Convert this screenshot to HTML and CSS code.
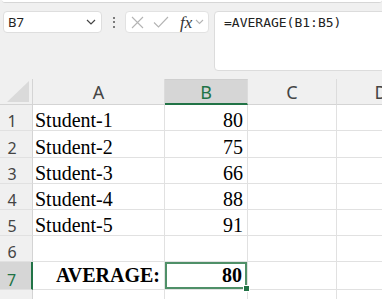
FILE: index.html
```html
<!DOCTYPE html>
<html lang="en">
<head>
  <meta charset="UTF-8">
  <meta name="viewport" content="width=device-width, initial-scale=1.0">
  <title>AVERAGE — Sheet1</title>
  <link rel="stylesheet" href="styles.css">
</head>
<body>

  <div class="ribbon-edge"></div>

  <!-- Formula bar -->
  <div class="formula-bar">
    <div class="name-box">
      <span>B7</span>
      <svg class="chev" width="10" height="6" viewBox="0 0 10 6"><path d="M1 1l4 4 4-4" fill="none" stroke="#444" stroke-width="1.2"/></svg>
    </div>
    <div class="grip"><i></i><i></i><i></i></div>
    <div class="fx-box">
      <svg width="13" height="13" viewBox="0 0 13 13"><path d="M1 1l11 11M12 1L1 12" fill="none" stroke="#b4b4b4" stroke-width="1.1"/></svg>
      <svg class="check" width="16" height="12" viewBox="0 0 16 12"><path d="M1 6.5l4.5 4.5L15 1" fill="none" stroke="#b4b4b4" stroke-width="1.1"/></svg>
      <span class="fx">fx</span>
      <svg width="9" height="6" viewBox="0 0 9 6"><path d="M1 1l3.5 3.5L8 1" fill="none" stroke="#b4b4b4" stroke-width="1.1"/></svg>
    </div>
    <div class="formula-input">=AVERAGE(B1:B5)</div>
  </div>

  <!-- Grid -->
  <div class="sheet">
    <div class="ch corner"><div class="tri"></div></div>
    <div class="ch">A</div>
    <div class="ch ch--sel">B</div>
    <div class="ch">C</div>
    <div class="ch">D</div>

    <div class="rh">1</div><div class="c">Student-1</div><div class="c num">80</div><div class="c"></div><div class="c"></div>
    <div class="rh">2</div><div class="c">Student-2</div><div class="c num">75</div><div class="c"></div><div class="c"></div>
    <div class="rh">3</div><div class="c">Student-3</div><div class="c num">66</div><div class="c"></div><div class="c"></div>
    <div class="rh">4</div><div class="c">Student-4</div><div class="c num">88</div><div class="c"></div><div class="c"></div>
    <div class="rh">5</div><div class="c">Student-5</div><div class="c num">91</div><div class="c"></div><div class="c"></div>
    <div class="rh">6</div><div class="c"></div><div class="c"></div><div class="c"></div><div class="c"></div>
    <div class="rh rh--sel">7</div><div class="c num bold">AVERAGE:</div><div class="c num bold active">80</div><div class="c"></div><div class="c"></div>
    <div class="rh">8</div><div class="c"></div><div class="c"></div><div class="c"></div><div class="c"></div>
  </div>

</body>
</html>
```

FILE: styles.css
```css
:root{
  --bg:#f0f0f0;
  --grid:#e1e1e1;
  --head-line:#d4d4d4;
  --green:#217346;
  --sel:#4f9068;
  --ui:#444;
}
*{margin:0;padding:0;box-sizing:border-box;}
body{background:var(--bg);font-family:"Noto Sans",sans-serif;color:#222;overflow:hidden;width:382px;height:299px;}

/* ---------- top edge of ribbon ---------- */
.ribbon-edge{height:3px;margin-left:2px;background:#fff;border-bottom:1px solid #d6d6d6;border-radius:0 0 6px 6px;}

/* ---------- formula bar ---------- */
.formula-bar{display:flex;align-items:flex-start;height:76px;padding:8px 0 0 3px;}
.name-box{width:99px;height:22px;background:#fff;border:1px solid #dedede;border-radius:4px;
          display:flex;align-items:center;justify-content:space-between;padding:0 5px 0 4px;font-size:13px;}
.grip{width:23px;height:22px;display:flex;flex-direction:column;align-items:center;justify-content:center;gap:2.5px;}
.grip i{display:block;width:2px;height:2px;background:#555;border-radius:1px;}
.fx-box{width:84px;height:22px;background:#fff;border:1px solid #e2e2e2;border-radius:4px;
        display:flex;align-items:center;padding-left:5px;}
.fx-box .check{margin-left:9px;}
.fx{font:italic 17px "Liberation Serif",serif;color:#333;margin-left:11px;line-height:1;}
.fx + svg{margin-left:3px;}
.formula-input{flex:1;margin-left:5px;margin-right:-10px;height:60px;background:#fff;border:1px solid #dcdcdc;border-radius:4px;
               font:13px/16px "DejaVu Sans Mono",monospace;color:#222;padding:3px 0 0 9px;}

/* ---------- sheet ---------- */
.sheet{display:grid;grid-template-columns:33px 132px 83px 89px 89px;
       grid-template-rows:26px 26px 27px 26px 26px 26px 26px 28px 26px;}
.ch{background:var(--bg);border-right:1px solid #dcdcdc;border-bottom:1px solid var(--head-line);
    display:flex;align-items:center;justify-content:center;font-size:18px;color:var(--ui);}
.ch--sel{background:#d6d6d6;border-bottom:2px solid var(--green);color:var(--green);border-top:1px solid #cfcfcf;}
.corner{justify-content:flex-end;align-items:flex-end;padding:0 3px 2px 0;border-right-color:var(--head-line);}
.tri{width:22px;height:21px;background:#dadada;clip-path:polygon(100% 0,100% 100%,0 100%);}

.rh{background:var(--bg);border-right:1px solid var(--head-line);border-bottom:1px solid var(--grid);
    display:flex;align-items:flex-end;justify-content:center;padding-right:8px;font-size:16px;line-height:18px;color:var(--ui);}
.rh--sel{background:#d6d6d6;border-right:2px solid var(--green);color:var(--green);}

.c{background:#fff;border-right:1px solid var(--grid);border-bottom:1px solid var(--grid);
   display:flex;align-items:flex-end;padding:0 4px 0 2px;
   font:20px/20px "Liberation Serif","Times New Roman",serif;color:#000;white-space:nowrap;}
.num{justify-content:flex-end;}
.bold{font-weight:bold;padding-bottom:4px;}
.active{position:relative;box-shadow:inset 0 0 0 2px var(--sel);padding-right:5px;}
.active::after{content:'';position:absolute;right:-3px;bottom:-3px;width:5px;height:5px;background:var(--green);border:1px solid #fff;}
```
